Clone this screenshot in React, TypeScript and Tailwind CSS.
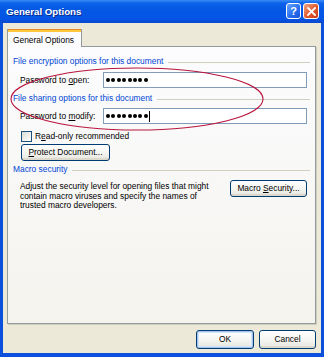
import type { ReactNode } from 'react'

// Windows XP "General Options" dialog (Word)

function U({ children }: { children: ReactNode }) {
  return <span className="underline underline-offset-[1px] decoration-[1px]">{children}</span>
}

function GroupHeader({ children }: { children: ReactNode }) {
  return (
    <div className="flex items-center gap-[5px] h-[10px] leading-[10px] text-[#0046d5]">
      <span className="whitespace-nowrap">{children}</span>
      <div className="flex-1 h-px bg-[#d0d0bf] mt-[2px]" />
    </div>
  )
}

function PasswordBox({ caret }: { caret?: boolean }) {
  return (
    <div className="w-[204px] h-[16px] border border-[#7f9db9] bg-white flex items-center pl-[2px]">
      <div className="flex items-center gap-[1.4px]">
        {Array.from({ length: 8 }).map((_, i) => (
          <span key={i} className="w-[4px] h-[4px] rounded-full bg-black" />
        ))}
      </div>
      {caret && <span className="ml-[1px] w-px h-[11px] bg-black" />}
    </div>
  )
}

function XpButton({ children, className, isDefault }: { children: ReactNode; className?: string; isDefault?: boolean }) {
  return (
    <button
      type="button"
      className={
        'rounded-[3px] border border-[#003c74] bg-[linear-gradient(to_bottom,#ffffff,#f4f4f0_55%,#e6e5de)] text-black leading-none flex items-center justify-center ' +
        (isDefault
          ? 'shadow-[inset_0_0_0_1px_#a9c3f0,inset_0_0_0_2px_#cfe3fb] '
          : 'shadow-[inset_0_-2px_0_#dcd8cc] ') +
        (className ?? '')
      }
    >
      {children}
    </button>
  )
}

export default function App() {
  return (
    <div className="relative w-[324px] h-[357px] flex flex-col bg-[#0b50dc] overflow-hidden font-['Liberation_Sans',Arial,sans-serif] text-[8.4px] text-black">
      {/* title bar */}
      <div className="h-[23px] shrink-0 flex items-start bg-[linear-gradient(to_bottom,#3b8cf6_0%,#0c62ea_14%,#0357e3_45%,#0555e6_80%,#0a47cf_100%)]">
        <span className="mt-[6px] ml-[6px] font-bold text-[9.7px] leading-[11px] text-white [text-shadow:1px_1px_0_#0b2a8c]">
          General Options
        </span>
        <div className="ml-auto mt-[3px] mr-[5px] flex gap-[2px]">
          <div className="w-[15px] h-[16px] rounded-[3px] border border-white bg-[linear-gradient(135deg,#6aa6fb,#2a6ff0_55%,#1a55d8)] flex items-center justify-center text-white font-bold text-[11px] leading-none">
            ?
          </div>
          <div className="w-[16px] h-[16px] rounded-[3px] border border-white bg-[linear-gradient(135deg,#f0a284,#e05a2c_55%,#c53a1a)] flex items-center justify-center">
            <svg width="9" height="9" viewBox="0 0 9 9">
              <path d="M1 1 L8 8 M8 1 L1 8" stroke="white" strokeWidth="1.8" strokeLinecap="square" />
            </svg>
          </div>
        </div>
      </div>

      {/* client area */}
      <div className="flex-1 mx-[3px] mb-[4px] bg-[#ece9d8] flex flex-col pl-[4px] pr-[5px] pt-[6px] pb-[4px]">
        {/* tab strip */}
        <div className="flex h-[17px] shrink-0">
          <div className="relative z-10 w-[75px] h-[18px] border-x border-[#919b9c] bg-[#fcfcfe] flex flex-col">
            <div className="h-[1px] bg-[#e68b2c]" />
            <div className="h-[2px] bg-[#ffc73c]" />
            <div className="flex-1 flex items-center pl-[5px] leading-[10px]">General Options</div>
          </div>
        </div>

        {/* panel */}
        <div className="h-[278px] shrink-0 border border-[#919b9c] bg-[linear-gradient(to_bottom,#fcfcfe,#f4f3ee)] shadow-[1px_1px_0_#d0cdc0] flex flex-col px-[5px] pt-[9px]">
          <GroupHeader>File encryption options for this document</GroupHeader>
          <div className="mt-[6px] flex items-center pl-[7px]">
            <span className="w-[83px] leading-[10px]">
              Password to <U>o</U>pen:
            </span>
            <PasswordBox />
          </div>

          <div className="mt-[5px]">
            <GroupHeader>File sharing options for this document</GroupHeader>
          </div>
          <div className="mt-[5px] flex items-center pl-[7px]">
            <span className="w-[83px] leading-[10px]">
              Password to <U>m</U>odify:
            </span>
            <PasswordBox caret />
          </div>

          <div className="mt-[6px] h-[12px] flex items-center pl-[8px] gap-[3px]">
            <span className="w-[11px] h-[11px] border border-[#1c5180] bg-[linear-gradient(135deg,#dcdcd5,#ffffff)]" />
            <span className="leading-[10px]">
              R<U>e</U>ad-only recommended
            </span>
          </div>

          <XpButton className="mt-[2px] ml-[8px] w-[89px] h-[17px]">
            <span>
              <U>P</U>rotect Document...
            </span>
          </XpButton>

          <div className="mt-[3px]">
            <GroupHeader>Macro security</GroupHeader>
          </div>
          <div className="mt-[6px] flex items-start pl-[7px]">
            <p className="mt-[2px] leading-[9.5px] whitespace-nowrap">
              Adjust the security level for opening files that might
              <br />
              contain macro viruses and specify the names of
              <br />
              trusted macro developers.
            </p>
            <XpButton className="ml-auto mr-[3px] w-[77px] h-[17px]">
              <span>
                Macro <U>S</U>ecurity...
              </span>
            </XpButton>
          </div>
        </div>

        {/* dialog buttons */}
        <div className="mt-[6px] flex justify-end gap-[5px]">
          <XpButton isDefault className="w-[58px] h-[19px]">
            OK
          </XpButton>
          <XpButton className="w-[57px] h-[19px]">Cancel</XpButton>
        </div>
      </div>

      {/* red hand-drawn annotation */}
      <svg className="absolute left-0 top-0 pointer-events-none" width="324" height="357" viewBox="0 0 324 357">
        <ellipse cx="137" cy="99" rx="126" ry="31" fill="none" stroke="#b8163e" strokeWidth="1.1" />
      </svg>
    </div>
  )
}
